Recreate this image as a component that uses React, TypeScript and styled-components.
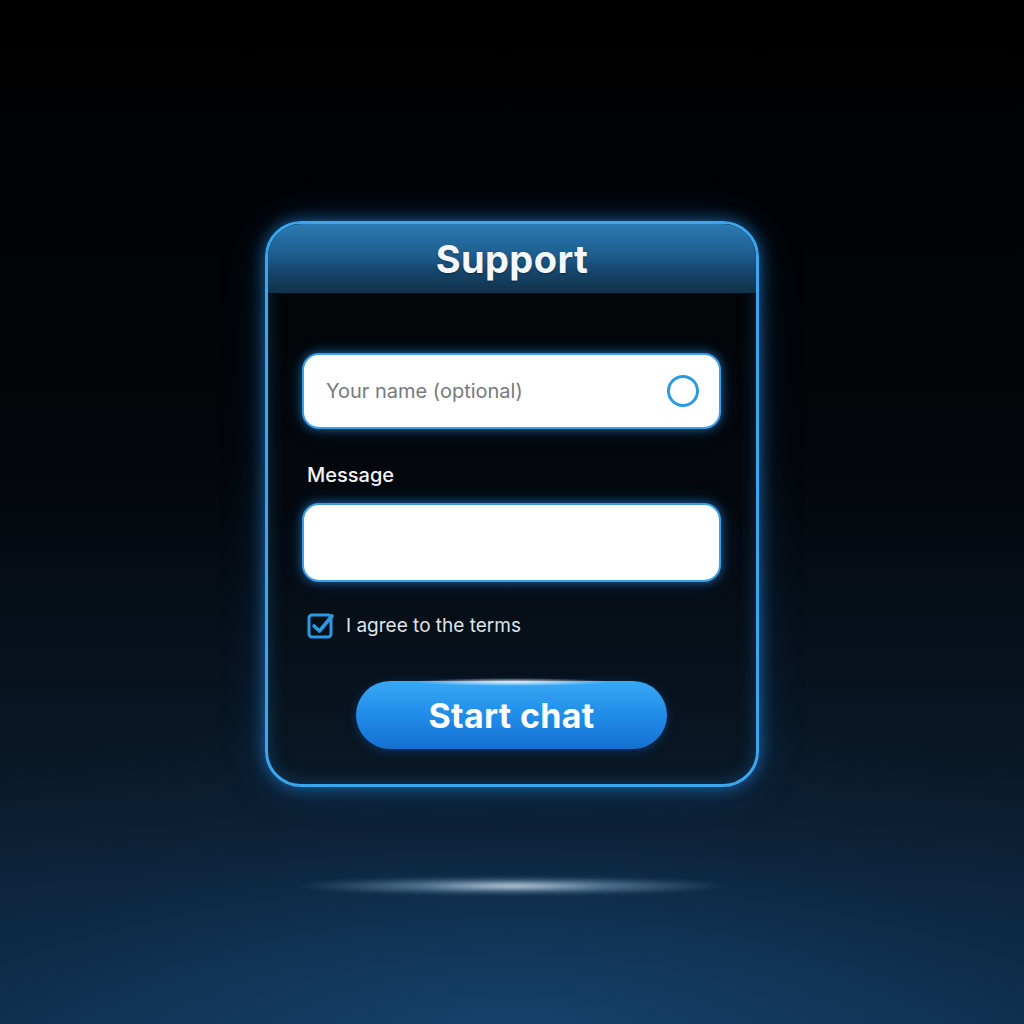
import React from 'react'
import styled, { createGlobalStyle } from 'styled-components'

const GlobalStyle = createGlobalStyle`
  html, body {
    margin: 0;
    padding: 0;
    background: #000;
  }
  body {
    font-family: Inter, "Noto Sans", "Liberation Sans", sans-serif;
  }
`

const Page = styled.div`
  position: relative;
  width: 1024px;
  height: 1024px;
  overflow: hidden;
  display: flex;
  justify-content: center;
  align-items: flex-start;
  padding-top: 221px;
  box-sizing: border-box;
  background:
    radial-gradient(ellipse 900px 320px at 50% 100%, rgba(25, 80, 130, 0.55), rgba(15, 45, 75, 0.3) 60%, transparent 100%),
    linear-gradient(180deg, #000 0%, #03060a 45%, #0a1a2a 78%, #103050 100%);
`

const Streak = styled.div`
  position: absolute;
  left: 50%;
  top: 886px;
  width: 440px;
  height: 18px;
  transform: translate(-50%, -50%);
  border-radius: 50%;
  background: radial-gradient(ellipse at center, rgba(235, 242, 250, 0.95) 0%, rgba(150, 190, 220, 0.5) 30%, transparent 70%);
  filter: blur(2px);
`

const Card = styled.div`
  position: relative;
  width: 494px;
  height: 566px;
  box-sizing: border-box;
  border: 3px solid #3aa6f0;
  border-radius: 36px;
  overflow: hidden;
  display: flex;
  flex-direction: column;
  background: linear-gradient(180deg, #020406 0%, #04080d 50%, #0a1826 100%);
  box-shadow:
    0 0 16px rgba(40, 150, 240, 0.6),
    0 0 44px rgba(30, 120, 220, 0.25),
    inset 0 0 18px rgba(40, 140, 230, 0.28);
`

const Header = styled.div`
  height: 70px;
  flex-shrink: 0;
  display: flex;
  align-items: center;
  justify-content: center;
  background: linear-gradient(180deg, #2a7ab2 0%, #22679a 30%, #1d5887 50%, #174a72 62%, #113048 100%);
  box-shadow: inset 0 -1px 0 rgba(0, 0, 0, 0.6);
`

const Title = styled.h1`
  margin: 0;
  color: #f4f8fc;
  font-size: 38px;
  font-weight: 700;
  letter-spacing: 0.4px;
  text-shadow: 0 1px 2px rgba(0, 0, 0, 0.4);
`

const Body = styled.div`
  display: flex;
  flex-direction: column;
  padding: 59px 35px 0 34px;
`

const Field = styled.div<{ $height: number }>`
  height: ${({ $height }) => $height}px;
  box-sizing: border-box;
  background: #fff;
  border: 2px solid #3a9ee8;
  border-radius: 17px;
  display: flex;
  align-items: center;
  justify-content: space-between;
  padding: 0 20px 0 22px;
  box-shadow: 0 0 10px rgba(40, 150, 240, 0.6), 0 0 22px rgba(30, 120, 220, 0.22);
`

const Placeholder = styled.span`
  color: #767a7e;
  font-size: 20px;
`

const Ring = styled.span`
  width: 26px;
  height: 26px;
  border: 3px solid #2a9ae4;
  border-radius: 50%;
`

const Label = styled.label`
  margin: 34px 0 16px 5px;
  color: #f2f4f6;
  font-size: 20px;
  font-weight: 500;
`

const CheckRow = styled.div`
  display: flex;
  align-items: center;
  gap: 11px;
  margin: 29px 0 0 5px;
`

const CheckText = styled.span`
  color: #dfe3e7;
  font-size: 19px;
`

const ButtonWrap = styled.div`
  display: flex;
  justify-content: center;
  margin-top: 42px;
`

const Button = styled.button`
  position: relative;
  width: 311px;
  height: 68px;
  border: none;
  border-radius: 34px;
  color: #fff;
  font-family: inherit;
  font-size: 34px;
  font-weight: 700;
  letter-spacing: 0.3px;
  background: linear-gradient(180deg, #38a8f4 0%, #2290ea 45%, #1470d2 100%);
  box-shadow: 0 2px 10px rgba(20, 110, 220, 0.35);

  &::before {
    content: '';
    position: absolute;
    left: 50%;
    top: -3px;
    width: 200px;
    height: 8px;
    transform: translateX(-50%);
    border-radius: 50%;
    background: radial-gradient(ellipse at center, rgba(255, 255, 255, 0.85), transparent 70%);
  }
`

const CheckBox = () => (
  <svg width="28" height="28" viewBox="0 0 28 28">
    <rect x="2" y="4" width="22" height="22" rx="3" fill="none" stroke="#2a9ae4" strokeWidth="3" />
    <path d="M7 15 L12.5 20 L25 5" fill="none" stroke="#2a9ae4" strokeWidth="3.6" strokeLinecap="round" strokeLinejoin="round" />
  </svg>
)

export default function App() {
  return (
    <>
      <GlobalStyle />
      <Page>
        <Streak />
        <Card>
          <Header>
            <Title>Support</Title>
          </Header>
          <Body>
            <Field $height={76}>
              <Placeholder>Your name (optional)</Placeholder>
              <Ring />
            </Field>
            <Label>Message</Label>
            <Field $height={79} />
            <CheckRow>
              <CheckBox />
              <CheckText>I agree to the terms</CheckText>
            </CheckRow>
            <ButtonWrap>
              <Button>Start chat</Button>
            </ButtonWrap>
          </Body>
        </Card>
      </Page>
    </>
  )
}
